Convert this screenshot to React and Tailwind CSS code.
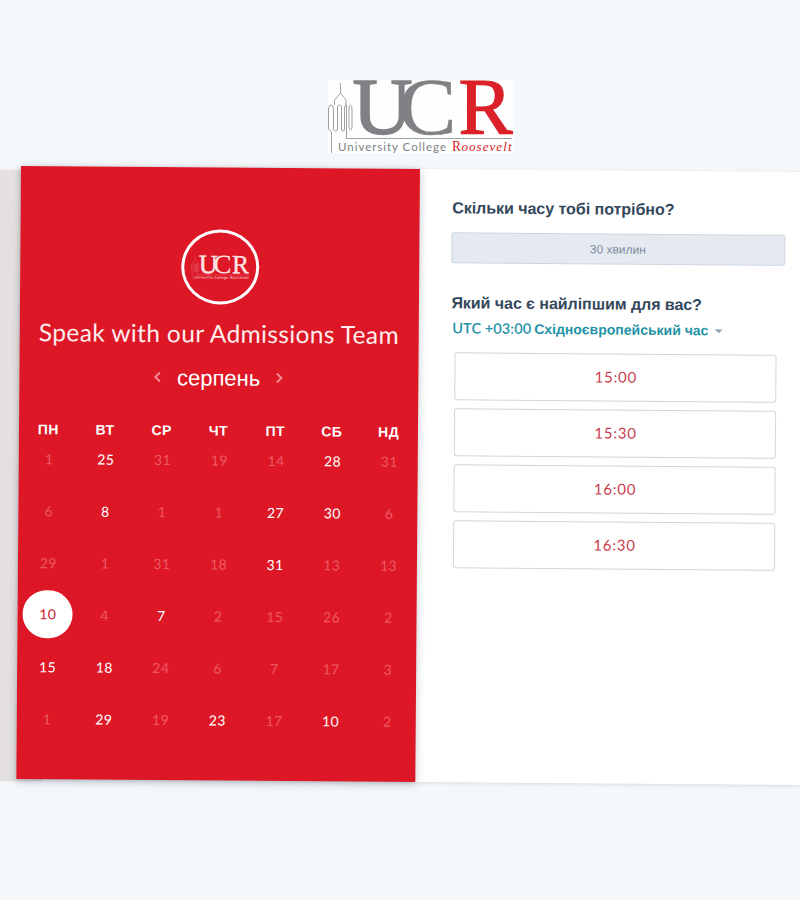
const weekdays = ["ПН", "ВТ", "СР", "ЧТ", "ПТ", "СБ", "НД"];

const weeks = [
  [1, 25, 31, 19, 14, 28, 31],
  [6, 8, 1, 1, 27, 30, 6],
  [29, 1, 31, 18, 31, 13, 13],
  [10, 4, 7, 2, 15, 26, 2],
  [15, 18, 24, 6, 7, 17, 3],
  [1, 29, 19, 23, 17, 10, 2],
];

// Week-column keys of the days that can be booked
const available = new Set(["0-1", "0-5", "1-1", "1-4", "1-5", "2-4", "3-2", "4-0", "4-1", "5-1", "5-3", "5-5"]);

const slots = ["15:00", "15:30", "16:00", "16:30"];

function Logo({ className, gray, red, line }) {
  return (
    <svg viewBox="0 0 185 73" className={className} preserveAspectRatio="none" overflow="visible">
      <g fill="none" stroke={line} strokeWidth="1">
        <path d="M12.500 3v10l-6 7v5M12.500 13l5.500 7v5" />
        <path d="M3.500 73V52l-3-3V29q0-4 2.500-4t2.500 4v20q0 2 2 2t2-2V27q0-2 2-2t2 2v22q0 2 1.500 2t1.500-2" />
        <path d="M18 25q-1.500 0-1.500 4v20" />
        <path d="M21 29q0-4 1.500-4t1.500 4v18q0 3-1.500 3t-1.500-3z" />
        <path d="M18.500 25v33.500H184" />
      </g>
      <g fontFamily="'Liberation Serif', serif" fontSize="80">
        <text x="24.500" y="53.500" fill={gray} stroke={gray} strokeWidth="1.600" textLength="60" lengthAdjust="spacingAndGlyphs">U</text>
        <text x="70.500" y="53.500" fill={gray} stroke={gray} strokeWidth="0.500" textLength="58" lengthAdjust="spacingAndGlyphs">C</text>
        <text x="130.500" y="53.500" fill={red} stroke={red} strokeWidth="1.200" textLength="54" lengthAdjust="spacingAndGlyphs">R</text>
      </g>
      <text x="10" y="70.500" fill={gray} fontFamily="Lato, sans-serif" fontSize="11.500" textLength="108">University College</text>
      <text x="124" y="70.500" fill={red} fontFamily="'Liberation Serif', serif" fontSize="14" textLength="9" lengthAdjust="spacingAndGlyphs">R</text>
      <text x="133.500" y="70.500" fill={red} fontFamily="'Liberation Serif', serif" fontSize="13" fontStyle="italic" textLength="50">oosevelt</text>
    </svg>
  );
}

function Chevron({ flip }) {
  return (
    <svg viewBox="0 0 8 12" className={flip ? "h-3 w-2 -scale-x-100" : "h-3 w-2"} fill="none" stroke="#f28a92" strokeWidth="2">
      <path d="M1.500 1.500 6 6l-4.500 4.500" />
    </svg>
  );
}

function Day({ value, week, column }) {
  if (week === 3 && column === 0) {
    return (
      <div className="relative -top-px flex h-12 w-[50px] items-center justify-center rounded-full bg-white text-[#c8202c]">
        {value}
      </div>
    );
  }
  return <span className={available.has(`${week}-${column}`) ? "text-white" : "text-[#ee5762]"}>{value}</span>;
}

export default function App() {
  return (
    <div className="h-[900px] w-[800px] overflow-hidden bg-[#f5f8fb] font-['Liberation_Sans',sans-serif]">
      <header className="flex h-[165.500px] pt-20 pl-[328px]">
        <Logo className="h-[73px] w-[185px] bg-[#fdfefe]" gray="#808184" red="#db2028" line="#a0a1a4" />
      </header>
      <div className="flex h-[613px]">
        <div className="mt-1 -mr-[21px] h-[611px] w-[42px] shrink-0 bg-[#e5e1e0] shadow-[0_0_4px_#efebed]" />
        <main className="flex h-[613px] w-[800px] shrink-0 origin-top-left rotate-[0.44deg] bg-white shadow-[0_1px_4px_rgba(45,62,80,0.16)]">
          <section className="flex w-[398.500px] shrink-0 flex-col items-center bg-[#dd1726] font-[Lato,'Liberation_Sans',sans-serif] text-white shadow-[0_2px_8px_rgba(45,62,80,0.3)]">
            <div className="mt-[62px] ml-px flex h-[75px] w-[78px] items-center justify-center rounded-[50%] border-[3px] border-white">
              <Logo className="h-6 w-[58px]" gray="#fbe3e4" red="#fbe3e4" line="#ee7a82" />
            </div>
            <h1 className="mt-[11px] h-9 text-[24.500px] leading-9 tracking-[0.370px] whitespace-nowrap text-[#fdeced]">Speak with our Admissions Team</h1>
            <div className="mt-2 flex h-9 items-center gap-[15.500px] font-['Liberation_Sans',sans-serif] text-[22px]">
              <Chevron flip />
              <span>серпень</span>
              <Chevron />
            </div>
            <div className="mt-[21px] ml-px grid h-7 w-[397px] grid-cols-7 items-center justify-items-center self-start font-['Liberation_Sans',sans-serif] text-[14px] font-bold tracking-[0.4px]">
              {weekdays.map((d) => (
                <span key={d}>{d}</span>
              ))}
            </div>
            <div className="-mt-2.5 ml-0.5 grid w-[397px] auto-rows-[51.900px] grid-cols-7 items-center justify-items-center self-start text-[14px] tracking-[0.4px]">
              {weeks.map((row, w) => row.map((v, c) => <Day key={`${w}-${c}`} value={v} week={w} column={c} />))}
            </div>
          </section>
          <section className="flex flex-1 flex-col pl-8 text-[#33475b]">
            <h2 className="mt-[27px] ml-px h-6 text-[16px] leading-6 font-bold tracking-[-0.030px] whitespace-nowrap">Скільки часу тобі потрібно?</h2>
            <div className="mt-3 flex h-[31px] w-[334px] items-center justify-center rounded-[3px] border border-[#cbd6e2] bg-[#e5eaf1] text-[12px] text-[#7c8b9e]">
              30 хвилин
            </div>
            <h2 className="mt-7 ml-px h-6 text-[16px] leading-6 font-bold tracking-[-0.050px] whitespace-nowrap">Який час є найліпшим для вас?</h2>
            <div className="mt-px ml-0.5 flex h-6 items-center text-[14px] font-bold whitespace-nowrap text-[#1f93a6]">
              <span className="font-[Lato,sans-serif] text-[14.500px] font-semibold tracking-[0.100px]">UTC +03:00</span>
              <span className="ml-[3px]">Східноєвропейський час</span>
              <span className="mt-0.5 ml-1.5 border-x-4 border-t-4 border-x-transparent border-t-[#8fa5b8]" />
            </div>
            <div className="mt-3 ml-1 flex w-[322px] flex-col gap-2 font-[Lato,sans-serif]">
              {slots.map((t) => (
                <button key={t} className="h-12 rounded-[3px] border border-[#d0d7df] pb-0.5 pl-0.5 text-[15px] tracking-[0.8px] text-[#c9414f]">
                  {t}
                </button>
              ))}
            </div>
          </section>
        </main>
      </div>
    </div>
  );
}
